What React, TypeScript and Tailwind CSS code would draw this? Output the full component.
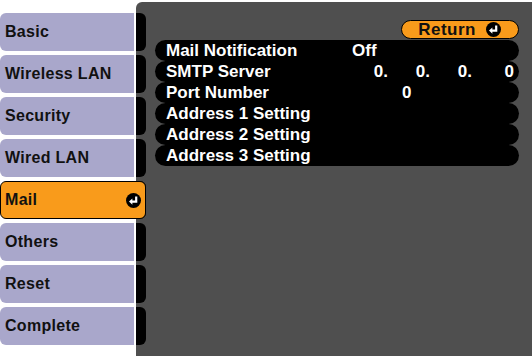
import React from "react";

const tabs = ["Basic", "Wireless LAN", "Security", "Wired LAN", "Mail", "Others", "Reset", "Complete"];
const SELECTED = "Mail";

function EnterIcon() {
  return (
    <svg width="15" height="15" viewBox="0 0 15 15">
      <circle cx="7.5" cy="7.5" r="7.5" fill="#000" />
      <path d="M10.2 3.6 V8.6 H5.6" stroke="#fff" strokeWidth="2.2" fill="none" />
      <polygon points="3,8.6 6.4,5.4 6.4,11.8" fill="#fff" />
    </svg>
  );
}

function Row({ label, children }: { label: string; children?: React.ReactNode }) {
  return (
    <div className="flex h-[21px] items-center rounded-full bg-black pl-[11px] text-[17px] tracking-normal text-white">
      <span className="w-[180px] shrink-0">{label}</span>
      {children}
    </div>
  );
}

export default function App() {
  return (
    <div
      className="flex h-[356px] w-[532px] overflow-hidden bg-white text-[16px] font-bold leading-none tracking-[0.3px]"
      style={{ fontFamily: '"Liberation Sans", Arial, sans-serif' }}
    >
      {/* Left tabs */}
      <div className="flex w-[136px] shrink-0 flex-col gap-[4px] pt-[13px]">
        {tabs.map((t) =>
          t === SELECTED ? (
            <div
              key={t}
              className="relative z-10 flex h-[38px] w-[146px] items-center justify-between rounded-[6px] border border-black bg-[#f99b1b] pl-[4px] pr-[4px] text-[#111]"
            >
              <span>{t}</span>
              <EnterIcon />
            </div>
          ) : (
            <div key={t} className="flex h-[38px] w-[136px] border-r-[2px] border-white">
              <div className="flex flex-1 items-center rounded-l-[6px] bg-[#a9a7cb] pl-[5px] text-[#111]">{t}</div>
            </div>
          )
        )}
      </div>

      {/* Panel */}
      <div className="mt-[2px] flex flex-1 rounded-tl-[6px] bg-[#4f4f4f]">
        <div className="flex w-[10px] shrink-0 flex-col gap-[4px] pt-[11px]">
          {tabs.map((t) => (
            <div key={t} className="h-[38px] rounded-r-[6px] bg-black" />
          ))}
        </div>
        <div className="ml-[9px] mr-[13px] flex flex-1 flex-col">
          <div className="mt-[18px] flex h-[19px] w-[118px] items-center justify-end gap-[10px] self-end rounded-full border border-black bg-[#f99b1b] pr-[17px] text-[17px] tracking-[0.5px] text-[#111]">
            <span>Return</span>
            <EnterIcon />
          </div>
          <div className="mt-[1px] flex flex-col">
            <Row label="Mail Notification">
              <span className="pl-[6px]">Off</span>
            </Row>
            <Row label="SMTP Server">
              <span className="w-[42px] text-right">0.</span>
              <span className="w-[42px] text-right">0.</span>
              <span className="w-[42px] text-right">0.</span>
              <span className="w-[42px] text-right">0</span>
            </Row>
            <Row label="Port Number">
              <span className="pl-[56px]">0</span>
            </Row>
            <Row label="Address 1 Setting" />
            <Row label="Address 2 Setting" />
            <Row label="Address 3 Setting" />
          </div>
        </div>
      </div>
    </div>
  );
}
